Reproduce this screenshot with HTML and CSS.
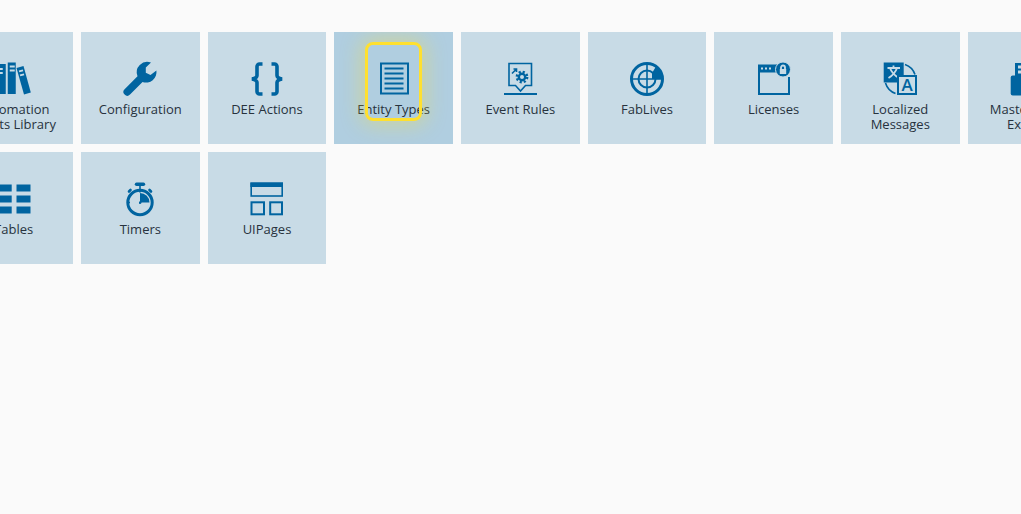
FILE: index.html
```html
<!DOCTYPE html>
<html lang="en">
<head>
<meta charset="utf-8">
<title>Administration</title>
<link rel="stylesheet" href="styles.css">
</head>
<body>
<div class="viewport">
<main class="grid">
  <a class="tile"><svg class="icon" viewBox="0 0 36 36"><g class="fill"><path d="M-6.250 3h8v30h-8zM1.750 3h8v30h-8zM11.750 1.500h8V33h-8z"/><path d="M20.500 7L27.500 5 34.800 31.500 28 33.500z"/></g><g class="cut"><path d="M1.750 7h5v2h-5zM1.750 11h5v2h-5zM13.750 4.500h5v2h-5zM13.750 8.500h5v2h-5z"/><path d="M22.800 9.500l4-1.100.5 1.800-4 1.100zM23.800 13.500l4-1.100.5 1.800-4 1.100z"/></g></svg><span class="label">Automation Assets Library</span></a>

  <a class="tile"><svg class="icon" viewBox="0 0 36 36"><path class="fill" d="M29 1.500A10.500 10.500 0 0 0 15.500 15.200L2.600 28.200a3.800 3.800 0 0 0 5.400 5.400L20.500 21A10.500 10.500 0 0 0 34.400 9.500L28.500 14 23.800 11.800 23.800 6.500z"/></svg><span class="label">Configuration</span></a>

  <a class="tile"><svg class="icon" viewBox="0 0 36 36"><path class="line brace" d="M13.500 3H10.500A2.500 2.500 0 0 0 8 5.500V14.500Q8 17 3 18Q8 19 8 21.500V30.500A2.500 2.500 0 0 0 10.500 33H13.500M22.500 3H25.500A2.500 2.500 0 0 1 28 5.500V14.500Q28 17 33 18Q28 19 28 21.500V30.500A2.500 2.500 0 0 1 25.500 33H22.500"/></svg><span class="label">DEE Actions</span></a>

  <a class="tile active"><svg class="icon" viewBox="0 0 36 36"><rect class="line thick" x="5" y="2.500" width="27" height="30"/><path class="line thick" d="M8.500 7.500h19M8.500 12.500h19M8.500 17.500h19M8.500 22.500h19M8.500 27.500h19"/></svg><span class="label">Entity Types</span><span class="focus"></span></a>

  <a class="tile"><svg class="icon" viewBox="0 0 36 36"><path class="line" d="M7 2.500H29.500V24.500H23.500L18.500 30 13.500 24.500H7z"/><path class="line thick" d="M2 33h33"/><circle class="line gear-core" cx="20" cy="16" r="3.200"/><circle class="line gear-teeth" cx="20" cy="16" r="5.200"/><path class="line" d="M10 12.500l4-4M11.500 8h3v3"/></svg><span class="label">Event Rules</span></a>

  <a class="tile"><svg class="icon" viewBox="0 0 36 36"><circle class="line heavy" cx="18" cy="18" r="15.500"/><circle class="line thick" cx="18" cy="18" r="8.500"/><path class="line" d="M18 2v32M2 18h32"/><path class="fill" d="M23 18V12L27 5.500A16 16 0 0 1 34 18z"/></svg><span class="label">FabLives</span></a>

  <a class="tile"><svg class="icon" viewBox="0 0 36 36"><path class="line thick" d="M3 5V33H33V16"/><path class="fill" d="M2 3.500h22v8H2z"/><path class="cut" d="M5 6.500h2v2H5zM9 6.500h2v2H9zM13 6.500h2v2h-2z"/><circle class="fill ring" cx="27" cy="8.500" r="7.500"/><path class="cut" d="M23.800 8h6.400v5h-6.400z"/><path class="stroke-cut" d="M25 8.500V6.500a2 2 0 0 1 4 0v2"/></svg><span class="label">Licenses</span></a>

  <a class="tile"><svg class="icon" viewBox="0 0 36 36"><path class="line" d="M23 3.500a16 16 0 0 1 10 10M3.500 22a16 16 0 0 0 10 10.500"/><path class="fill" d="M1.700 1.500h20v20h-20z"/><path class="stroke-cut" d="M5.500 7h12.500M11.500 4.500v2.500M15 7q-2 6-8.500 10M8 7q2 6 9 10"/><rect class="tile-fill line thick" x="16" y="15" width="18" height="18"/><text class="glyph" x="25" y="30">A</text></svg><span class="label">Localized Messages</span></a>

  <a class="tile"><svg class="icon" viewBox="0 0 36 36"><path class="fill" d="M6 2h24v14H6z"/><rect class="fill" x="1.700" y="14.500" width="32.500" height="20" rx="2"/><path class="cut" d="M9 4.500h4v3H9zM9 9.500h4v3H9zM16 4.500h10v3H16zM16 9.500h10v3H16z"/></svg><span class="label">Master Data Export</span></a>

  <a class="tile"><svg class="icon" viewBox="0 0 36 36"><path class="fill" d="M1.500 3.500h14.200v7H1.500zM20.500 3.500h14v7h-14zM1.500 14.500h14.200v7H1.500zM20.500 14.500h14v7h-14zM1.500 25.500h14.200v7H1.500zM20.500 25.500h14v7h-14z"/></svg><span class="label">Tables</span></a>

  <a class="tile"><svg class="icon" viewBox="0 0 36 36"><circle class="line heavy" cx="18" cy="21.500" r="12.200"/><path class="fill" d="M18 21.500v-9.500a9.500 9.500 0 0 1 9.500 9.500z"/><path class="line ticks" d="M18 9v25M5.500 21.500h25"/><path class="line" d="M18 4v6"/><path class="line cap" d="M14.500 3.300h7"/><path class="line knob" d="M7 10.500l1.500-1.500M29 10.500l-1.500-1.500"/></svg><span class="label">Timers</span></a>

  <a class="tile"><svg class="icon" viewBox="0 0 36 36"><path class="fill" d="M1.400 1.500H34V6H1.400z"/><rect class="line" x="2.200" y="2.300" width="31" height="12.700"/><rect class="line thick" x="2.500" y="21.300" width="12.500" height="12"/><rect class="line thick" x="21.200" y="21.300" width="11.800" height="12"/></svg><span class="label">UIPages</span></a>
</main>
</div>
</body>
</html>
```
FILE: styles.css
```css
* { box-sizing: border-box; }

html, body {
  margin: 0;
  height: 100%;
}

body {
  background: #fafafa;
  overflow: hidden;
  font-family: "Open Sans", sans-serif;
  color: #27323d;
}

.viewport {
  width: 1021px;
  height: 514px;
  overflow: hidden;
  padding-top: 32px;
}

.grid {
  display: grid;
  grid-template-columns: repeat(9, 118.67px);
  grid-auto-rows: 112px;
  gap: 8px;
  margin-left: -45.67px;
  width: 1200px;
}

.tile {
  position: relative;
  display: flex;
  flex-direction: column;
  align-items: center;
  padding: 29px 8px 0;
  background: #c8dbe6;
  text-align: center;
}

.tile.active {
  background: #b0cee0;
  overflow: hidden;
}

.icon {
  display: block;
  width: 36px;
  height: 36px;
  flex: none;
  overflow: visible;
}

.label {
  display: block;
  width: 100%;
  margin-top: 5px;
  font-size: 13px;
  line-height: 15px;
}

.fill { fill: #0064a0; }
.cut { fill: #c8dbe6; }

.line {
  fill: none;
  stroke: #0064a0;
  stroke-width: 1.6;
}

.tile-fill.line { fill: #c8dbe6; }
.heavy { stroke-width: 3; }
.thick { stroke-width: 2; }
.brace { stroke-width: 3.6; }
.gear-core { stroke-width: 2.4; }

.gear-teeth {
  stroke-width: 2.4;
  stroke-dasharray: 2.100 2;
}

.ticks { stroke-dasharray: 2.500 9 2.500 11; }

.cap {
  stroke-width: 3.4;
  stroke-linecap: round;
}

.knob {
  stroke-width: 2.6;
  stroke-linecap: round;
}

.ring {
  stroke: #c8dbe6;
  stroke-width: 1;
}

.stroke-cut {
  fill: none;
  stroke: #c8dbe6;
  stroke-width: 1.8;
}

.glyph {
  fill: #0064a0;
  font-family: "Open Sans", sans-serif;
  font-size: 17px;
  font-weight: 600;
  text-anchor: middle;
}

.focus {
  position: absolute;
  left: 31px;
  top: 10px;
  width: 57px;
  height: 79px;
  border: 3px solid #ffe02e;
  border-radius: 8px;
  box-shadow: 0 0 20px 4px rgba(255, 224, 46, .35);
  pointer-events: none;
}
```
